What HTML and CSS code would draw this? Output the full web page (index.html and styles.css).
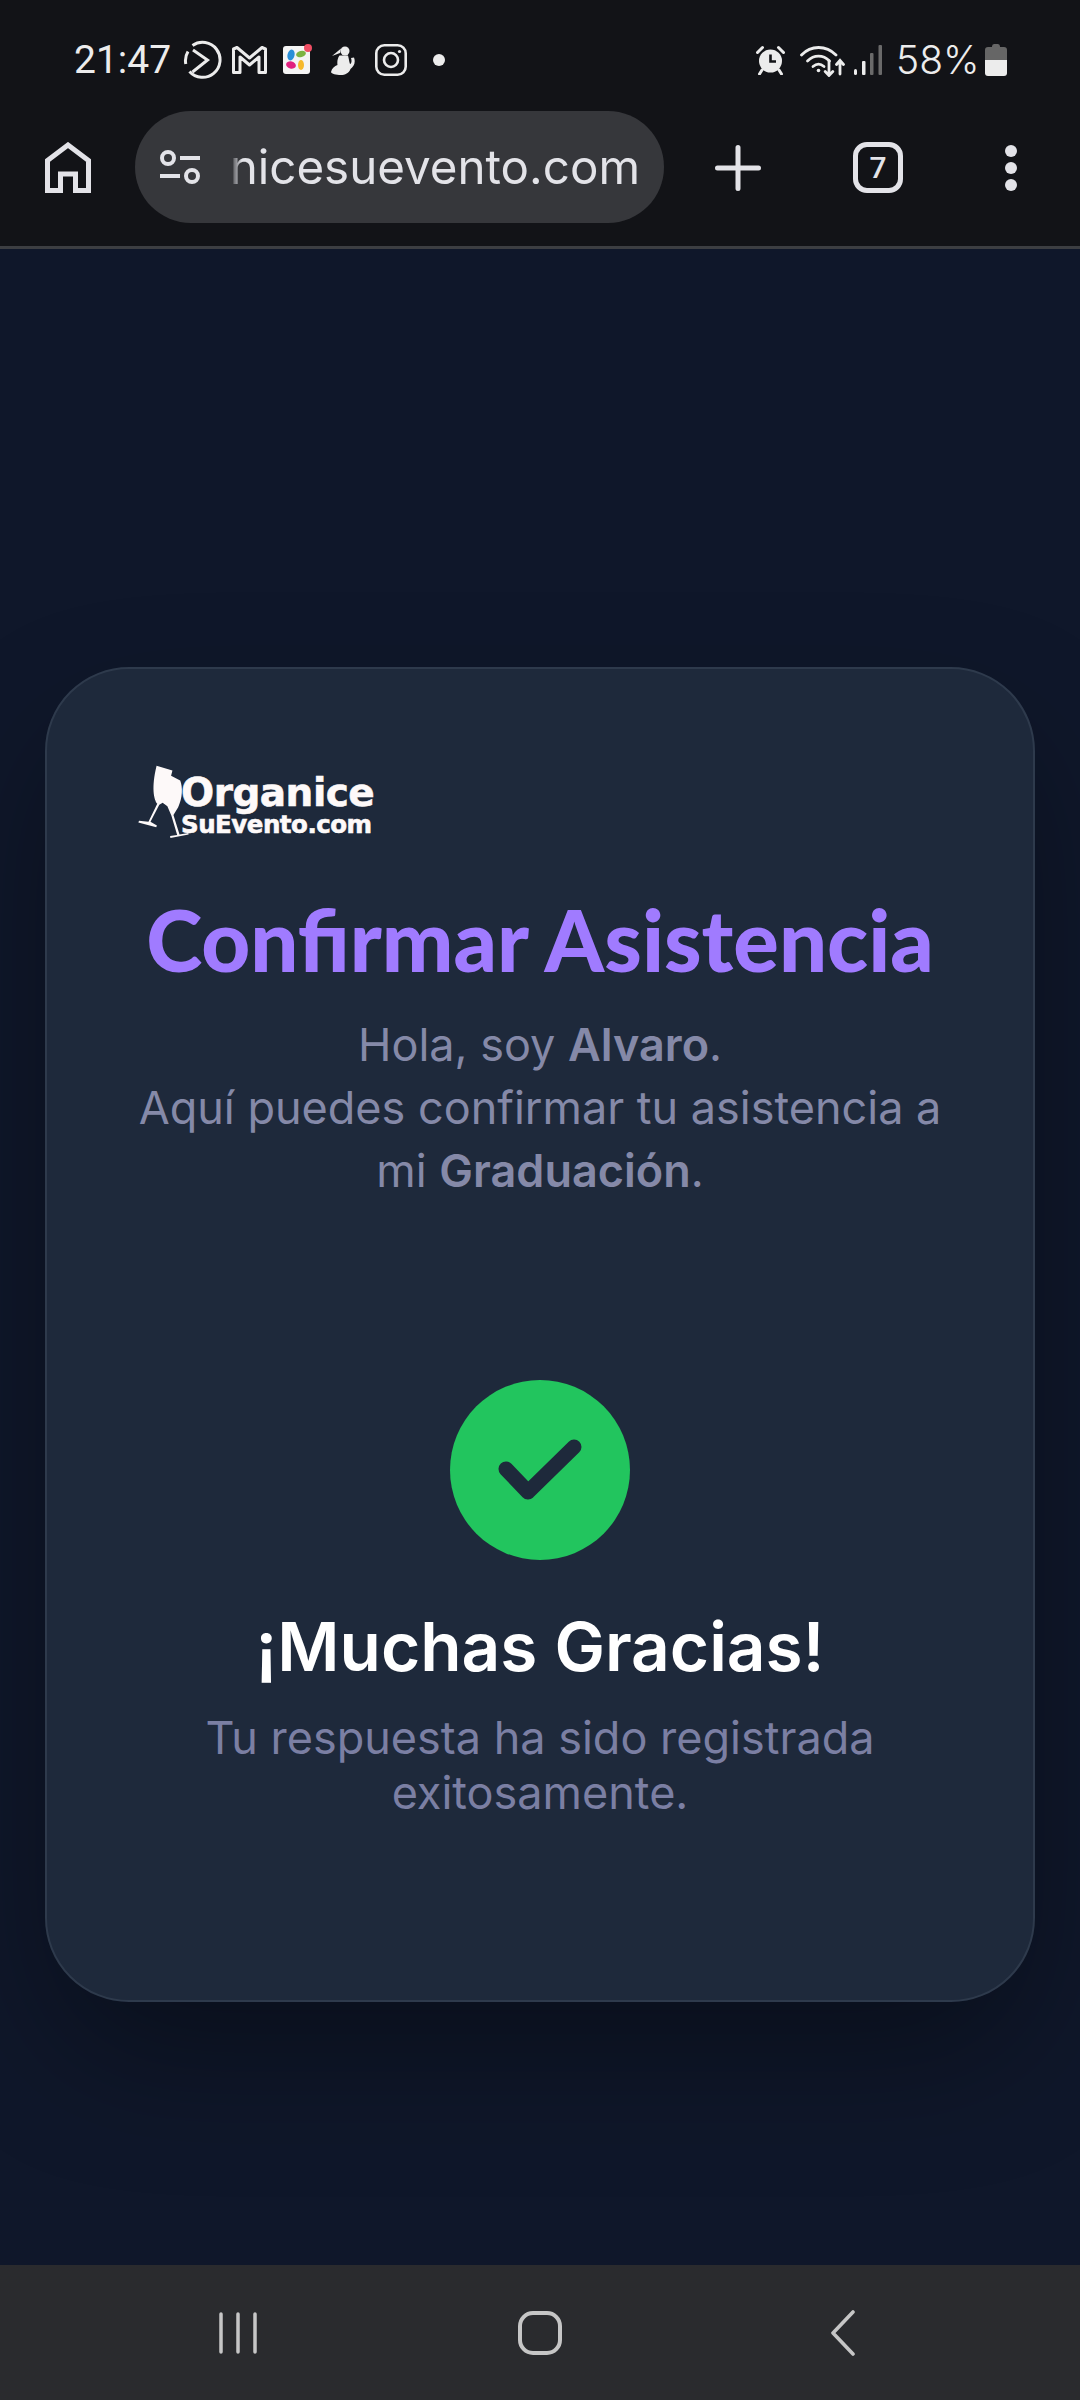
FILE: index.html
```html
<!DOCTYPE html>
<html lang="es">
<head>
<meta charset="utf-8">
<title>Confirmar Asistencia</title>
<link rel="stylesheet" href="styles.css">
</head>
<body>
<div class="phone">

<div class="statusbar">
  <div class="status-group">
    <span class="status-text time">21:47</span>
    <svg class="ic-play" viewBox="0 0 40 40" fill="none" stroke="#ececec" stroke-width="3"><path d="M9.5 5.500A17.5 17.5 0 1 1 6.500 31.500"/><path d="M2.800 24A17.500 17.500 0 0 1 5 11.500"/><path d="M10 10L24.500 20 9.500 32"/></svg>
    <svg class="ic-mail" viewBox="0 0 35 28" fill="none" stroke="#ececec" stroke-width="3" stroke-linejoin="round"><path d="M1.5 26.500V3L5 1.500 17.500 12 30 1.500 33.500 3V26.500H27V11L17.500 19 8 11V26.500Z"/></svg>
    <svg class="ic-app" viewBox="0 0 30 30"><rect x="0" y="2" width="27" height="28" rx="3" fill="#f4f4f4"/><ellipse cx="8" cy="11" rx="3.500" ry="5.500" fill="#2a8fd8" transform="rotate(15 8 11)"/><ellipse cx="18" cy="10" rx="5" ry="3" fill="#7cb342" transform="rotate(-15 18 10)"/><ellipse cx="8" cy="21" rx="5" ry="3.500" fill="#e0217f" transform="rotate(15 8 21)"/><ellipse cx="18" cy="21" rx="3" ry="5" fill="#f6b92b"/><circle cx="25" cy="4" r="4" fill="#ef4d63"/></svg>
    <svg class="ic-fig" viewBox="0 0 24 29" fill="#ececec"><circle cx="14" cy="5" r="4.500"/><path d="M10 2.500L1 10 9 7Z"/><path d="M8.500 9.500H17C18 13 18 15 19 18 20.500 17.500 21 15 20 12L23 11.500C25 17 22.500 21 19.500 23 18 27 14 29 10 29 5 29 0.500 28 0 26 1 22 3.500 20 6.500 19 6 16 6.500 12 8.500 9.500Z"/></svg>
    <svg class="ic-insta" viewBox="0 0 32 32" fill="none" stroke="#ececec" stroke-width="2.600"><rect x="1.300" y="1.300" width="29.400" height="29.400" rx="8"/><circle cx="16" cy="16" r="7"/><circle cx="24.500" cy="7.500" r="1.600" fill="#ececec" stroke="none"/></svg>
    <span class="notif-dot"></span>
  </div>
  <div class="status-group">
    <svg class="ic-alarm" viewBox="0 0 29 30"><path d="M1.500 7.500L6.500 2.500M27.500 7.500L22.500 2.500M6 25L3.500 29M23 25L25.500 29" stroke="#ececec" stroke-width="3" stroke-linecap="round"/><circle cx="14.500" cy="16" r="11.500" fill="#ececec"/><path d="M14.500 9.500V16.500H20" fill="none" stroke="#121317" stroke-width="2.600"/></svg>
    <svg class="ic-wifi" viewBox="0 0 45 33" fill="none" stroke="#ececec" stroke-width="2.800" stroke-linecap="round"><path d="M1.500 11C11 1 26 1 36 11"/><path d="M7.500 17C14 10.500 23 10.500 29.500 17"/><path d="M13 22.500C16.500 19.500 20.500 19.500 24 22.500"/><circle cx="18.500" cy="26.500" r="1.800" fill="#ececec" stroke="none"/><path d="M29 17V31M25.200 27.500L29 31.500 32.800 27.500M40 30V17M36.500 20.500L40 16.500 43.500 20.500"/></svg>
    <svg class="ic-signal" viewBox="0 0 28 30"><rect x="0" y="24" width="3" height="6" rx="1.500" fill="#ececec"/><rect x="8" y="16" width="3.500" height="14" rx="1" fill="#ececec"/><rect x="16" y="8" width="3.500" height="22" rx="1" fill="#6a6a6a"/><rect x="24.500" y="0" width="3.500" height="30" rx="1" fill="#6a6a6a"/></svg>
    <span class="status-text pct">58%</span>
    <svg class="ic-batt" viewBox="0 0 22 32"><path d="M7 2.500Q7 0 9 0H13Q15 0 15 2.500V3H19Q22 3 22 6V16H0V6Q0 3 3 3H7Z" fill="#666"/><path d="M0 16H22V29Q22 32 19 32H3Q0 32 0 29Z" fill="#ececec"/></svg>
  </div>
</div>

<div class="toolbar">
  <svg class="ic-home" viewBox="0 0 46 51" fill="none" stroke="#e3e3e8" stroke-width="5"><path d="M2.500 48.500V18.500L23 3 43.500 18.500V48.500H30.500V32H15.500V48.500Z"/></svg>
  <div class="urlbar">
    <svg class="ic-tune" viewBox="0 0 42 34" fill="none" stroke="#e3e3e8" stroke-width="4"><circle cx="9" cy="8" r="6"/><path d="M21 8H41M1 26H21"/><circle cx="33" cy="26" r="6"/></svg>
    <span class="url-text">nicesuevento.com</span>
  </div>
  <svg class="ic-plus" viewBox="0 0 46 46" stroke="#e3e3e8" stroke-width="5" stroke-linecap="round"><path d="M23 2.500V43.500M2.500 23H43.500"/></svg>
  <div class="tabs">7</div>
  <svg class="ic-more" viewBox="0 0 12 46" fill="#e3e3e8"><circle cx="6" cy="6" r="6"/><circle cx="6" cy="23" r="6"/><circle cx="6" cy="40" r="6"/></svg>
</div>

<div class="page">
  <div class="card">
    <div class="logo">
      <svg class="logo-glasses" viewBox="20 25 160 225" fill="#fdf9f9"><path d="M78 30L125 44 121 60 148 74C156 95 155 125 142 153L128 176 146 234 172 229 173 234 119 244 118 238 139 235 122 178 110 150 96 140 86 146 60 196 79 207 77 212 24 198 26 193 54 196 80 143C70 130 62 95 78 30Z"/></svg>
      <div class="logo-words">
        <span class="logo-top">Organice</span>
        <span class="logo-bottom">SuEvento.com</span>
      </div>
    </div>
    <h1 class="title">Confirmar Asistencia</h1>
    <p class="intro">Hola, soy <b>Alvaro</b>.<br>Aquí puedes confirmar tu asistencia a<br>mi <b>Graduación</b>.</p>
    <div class="check">
      <svg viewBox="0 0 90 66" fill="none" stroke="#1e293b" stroke-width="15" stroke-linecap="round" stroke-linejoin="round"><path d="M11 32L33 55 79 10"/></svg>
    </div>
    <h2 class="thanks">¡Muchas Gracias!</h2>
    <p class="done">Tu respuesta ha sido registrada exitosamente.</p>
  </div>
</div>

<div class="navbar">
  <svg class="ic-recents" viewBox="0 0 38 42" stroke="#c6c6c6" stroke-width="3.500" stroke-linecap="round"><path d="M2 2V40M19 2V40M36 2V40"/></svg>
  <svg class="ic-square" viewBox="0 0 44 44" fill="none" stroke="#c6c6c6" stroke-width="4"><rect x="2" y="2" width="40" height="40" rx="13"/></svg>
  <svg class="ic-back" viewBox="0 0 24 46" fill="none" stroke="#c6c6c6" stroke-width="3.600" stroke-linecap="round" stroke-linejoin="round"><path d="M22 2L2 23 22 44"/></svg>
</div>

</div>
</body>
</html>
```

FILE: styles.css
```css
html, body { margin: 0; padding: 0; background: #0f172a; }
svg { display: block; flex: none; }

.phone { width: 1080px; height: 2400px; display: flex; flex-direction: column; overflow: hidden; font-family: Inter, "Liberation Sans", sans-serif; }

/* status bar */
.statusbar { height: 102px; padding: 9px 73px 0 74px; box-sizing: content-box; display: flex; justify-content: space-between; align-items: center; background: #121317; color: #ececec; }
.status-group { display: flex; align-items: center; }
.status-text { font-family: Roboto, "Liberation Sans", sans-serif; font-size: 39px; line-height: 46px; }
.time { width: 94px; }
.ic-play { width: 40px; height: 40px; margin-left: 15px; }
.ic-mail { width: 35px; height: 28px; margin-left: 9px; }
.ic-app { width: 30px; height: 30px; margin-left: 16px; margin-top: -2px; }
.ic-fig { width: 24px; height: 29px; margin-left: 18px; }
.ic-insta { width: 32px; height: 32px; margin-left: 20px; }
.notif-dot { width: 12px; height: 12px; margin-left: 26px; border-radius: 50%; background: #ececec; }
.ic-alarm { width: 29px; height: 30px; }
.ic-wifi { width: 45px; height: 33px; margin-left: 15px; }
.ic-signal { width: 28px; height: 30px; margin-left: 9px; }
.pct { margin-left: 14px; width: 83px; font-family: Inter, "Liberation Sans", sans-serif; font-size: 39px; font-weight: 300; white-space: nowrap; }
.ic-batt { width: 22px; height: 32px; margin-left: 6px; }

/* browser toolbar */
.toolbar { height: 135px; display: flex; align-items: flex-start; background: #121317; border-bottom: 3px solid #3c3e42; }
.ic-home { width: 46px; height: 51px; margin: 31px 0 0 45px; }
.urlbar { width: 529px; height: 112px; margin-left: 44px; padding: 0 24px; box-sizing: border-box; display: flex; align-items: center; justify-content: space-between; border-radius: 56px; background: #36373b; }
.ic-tune { width: 42px; height: 34px; }
.url-text { font-size: 47.500px; line-height: 60px; white-space: nowrap; color: #e3e3e8; -webkit-mask-image: linear-gradient(to right, transparent 0, #000 12px); mask-image: linear-gradient(to right, transparent 0, #000 12px); }
.ic-plus { width: 46px; height: 46px; margin: 34px 0 0 51px; }
.tabs { width: 50px; height: 51px; margin: 31px 0 0 92px; box-sizing: border-box; display: flex; align-items: center; justify-content: center; border: 5px solid #e3e3e8; border-radius: 14px; font-family: Roboto, "Liberation Sans", sans-serif; font-size: 30px; font-weight: 500; color: #e3e3e8; }
.ic-more { width: 12px; height: 46px; margin: 34px 0 0 102px; }

/* page content */
.page { flex: 1; padding: 418px 45px 0; }
.card { height: 1335px; box-sizing: border-box; padding: 94px 60px 0; border: 2px solid #2e3a4c; border-radius: 84px; background: #1e293b; box-shadow: 0 60px 140px -20px rgba(0, 0, 0, 0.4); text-align: center; }
.logo { display: flex; margin-left: 30px; height: 78px; }
.logo-glasses { width: 54px; height: 78px; }
.logo-words { display: flex; flex-direction: column; margin-left: -10px; text-align: left; color: #fdf9f9; font-family: "DejaVu Sans", sans-serif; font-weight: 700; -webkit-text-stroke: 0.6px #fdf9f9; }
.logo-top { font-size: 39px; line-height: 42px; margin-top: 9px; letter-spacing: -0.5px; }
.logo-bottom { font-size: 24.500px; line-height: 22px; letter-spacing: -0.5px; }
.title { margin: 53px 0 0; font-family: Lato, sans-serif; font-size: 85px; line-height: 90px; font-weight: 900; color: #a07bff; }
.intro { margin: 29px 0 0; padding: 0 20px; font-size: 45px; line-height: 63px; color: #8589a8; }
.intro b { font-weight: 600; }
.check { width: 180px; height: 180px; margin: 178px auto 0; display: flex; align-items: center; justify-content: center; border-radius: 50%; background: #22c55e; }
.check svg { width: 90px; height: 66px; }
.thanks { margin: 47px 0 0; font-size: 67.500px; line-height: 80px; font-weight: 600; color: #fff; }
.done { margin: 23px 0 0; padding: 0 40px; font-size: 45px; line-height: 55px; color: #7b7fa3; }

/* android nav */
.navbar { height: 135px; position: relative; background: #2a2b2e; display: flex; align-items: center; }
.ic-recents { width: 38px; height: 42px; margin-left: 219px; }
.ic-square { width: 44px; height: 44px; margin-left: 261px; }
.ic-back { width: 24px; height: 46px; margin-left: 269px; }
```
